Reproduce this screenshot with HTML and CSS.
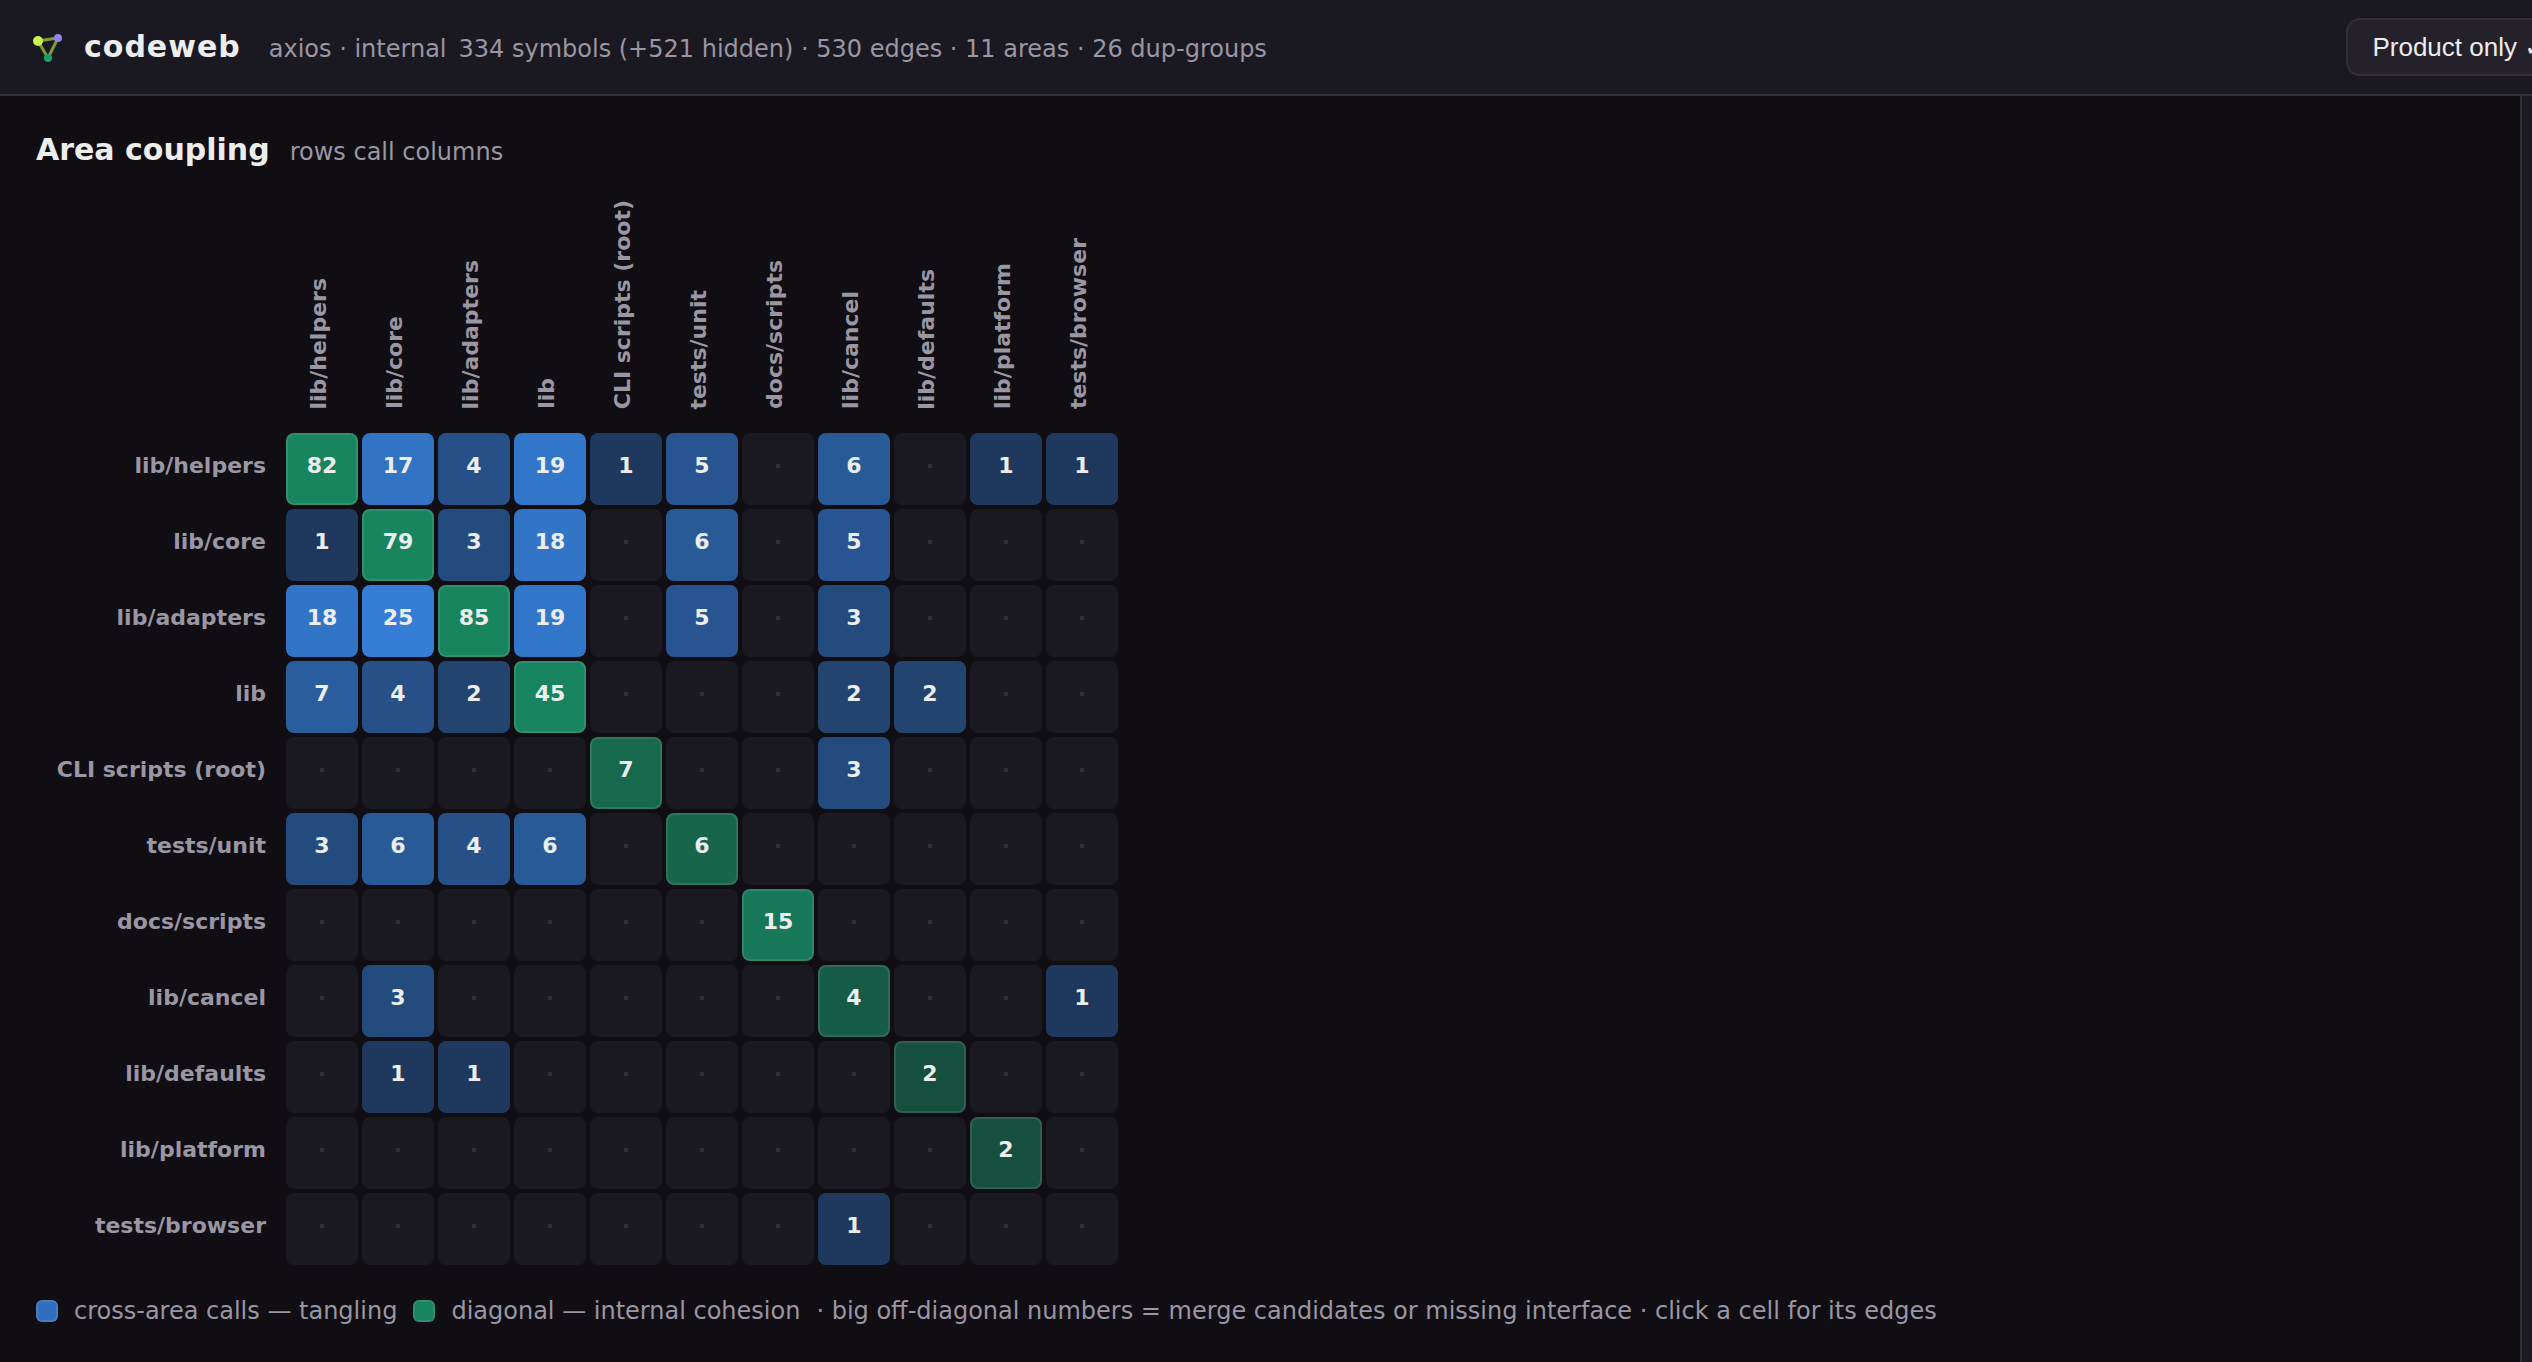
FILE: index.html
```html
<!DOCTYPE html>
<html lang="en">
<head>
    <meta charset="UTF-8">
    <meta name="viewport" content="width=device-width, initial-scale=1.0">
    <title>codeweb</title>
    <link rel="stylesheet" href="styles.css">
</head>
<body>
    <header class="topbar">
        <svg class="logo" viewBox="0 0 36 36" aria-hidden="true">
            <path d="M8 12 L28 9 L18 29 Z" fill="none" stroke="#7f9a37" stroke-width="3"/>
            <circle cx="8" cy="12" r="5" fill="#c8f54a"/>
            <circle cx="28" cy="9" r="4" fill="#9085e9"/>
            <circle cx="18" cy="29" r="4" fill="#199e70"/>
        </svg>
        <div class="heading">
            <span class="brand">codeweb</span>
            <span class="meta"><span>axios · internal</span><span>334 symbols (+521 hidden) · 530 edges · 11 areas · 26 dup-groups</span></span>
        </div>
        <button type="button" class="filter">Product only ✓</button>
    </header>

    <div class="layout">
        <main class="matrix-view">
            <div class="title-row">
                <h1>Area coupling</h1>
                <span class="hint">rows call columns</span>
            </div>

            <table class="matrix">
                <thead><tr id="matrix-head"><td></td></tr></thead>
                <tbody id="matrix-body"></tbody>
            </table>

            <div class="legend">
                <span class="key"><i class="swatch cross"></i>cross-area calls — tangling</span>
                <span class="key"><i class="swatch diagonal"></i>diagonal — internal cohesion</span>
                <span>· big off-diagonal numbers = merge candidates or missing interface · click a cell for its edges</span>
            </div>
        </main>
        <aside class="side-panel"></aside>
    </div>
    <script src="matrix.js"></script>
</body>
</html>
```
FILE: styles.css
```css
* {
    box-sizing: border-box;
}

body {
    margin: 0;
    height: 100vh;
    display: flex;
    flex-direction: column;
    overflow: hidden;
    background: #100d13;
    color: #ededed;
    font-family: "DejaVu Sans", sans-serif;
    font-size: 24px;
}

/* Top bar */
.topbar {
    display: flex;
    align-items: center;
    padding: 18px 0 18px 30px;
    background: #1a1921;
    border-bottom: 2px solid #322f39;
    white-space: nowrap;
    overflow: hidden;
}

.logo {
    width: 36px;
    height: 36px;
    flex: none;
    margin-right: 18px;
}

.heading {
    display: flex;
    align-items: baseline;
    gap: 28px;
    padding-bottom: 2px;
}

.brand {
    font-size: 30px;
    font-weight: bold;
    letter-spacing: 1px;
}

.meta {
    display: flex;
    gap: 12px;
    color: #9a96a3;
}

.filter {
    flex: none;
    margin-left: auto;
    margin-right: -40px;
    padding: 12px 24px;
    border: 2px solid #322f39;
    border-radius: 14px;
    background: #24212a;
    color: #ededed;
    font-family: "Liberation Sans", "DejaVu Sans", sans-serif;
    font-size: 26px;
    line-height: 30px;
}

/* Main area and the panel on the right */
.layout {
    flex: 1;
    display: flex;
    min-height: 0;
}

.matrix-view {
    flex: 1;
    padding: 34px 36px;
}

.side-panel {
    width: 12px;
    background: #1a1921;
    border-left: 2px solid #322f39;
}

.title-row {
    display: flex;
    align-items: baseline;
    gap: 20px;
    line-height: 40px;
}

h1 {
    margin: 0;
    font-size: 30px;
}

.hint,
.legend {
    color: #9a96a3;
}

/* Coupling matrix */
.matrix {
    margin-left: -4px;
    border-spacing: 4px;
    font-size: 22px;
    font-weight: bold;
}

.matrix td,
.matrix th {
    padding: 0;
}

.matrix thead th {
    vertical-align: bottom;
    color: #9a96a3;
}

.col-label {
    display: block;
    width: 72px;
    padding: 20px 20px 24px 0;
    line-height: 26px;
    writing-mode: vertical-rl;
    transform: rotate(180deg);
    text-align: left;
    white-space: nowrap;
}

.matrix tbody th {
    min-width: 246px;
    padding: 0 16px 8px 0;
    color: #9a96a3;
    text-align: right;
}

.cell {
    display: block;
    width: 72px;
    height: 72px;
    padding: 0 0 8px;
    border: 2px solid transparent;
    border-radius: 8px;
    background: #1a1921 border-box;
    color: #ededed;
    font: inherit;
}

.cell.empty {
    color: #322f39;
}

.cell.inner {
    border-color: rgba(255, 255, 255, 0.1);
}

/* Legend */
.legend {
    display: flex;
    align-items: center;
    gap: 16px;
    margin-top: 24px;
    line-height: 36px;
    white-space: nowrap;
}

.key {
    display: flex;
    align-items: center;
    gap: 16px;
}

.swatch {
    width: 22px;
    height: 22px;
    border: 2px solid rgba(255, 255, 255, 0.1);
    border-radius: 6px;
}

.swatch.cross {
    background: #316fbc border-box;
}

.swatch.diagonal {
    background: #18845f border-box;
}
```
FILE: matrix.js
```js
const areas = ['lib/helpers', 'lib/core', 'lib/adapters', 'lib', 'CLI scripts (root)', 'tests/unit',
    'docs/scripts', 'lib/cancel', 'lib/defaults', 'lib/platform', 'tests/browser'];

const calls = [
    [82, 17, 4, 19, 1, 5, 0, 6, 0, 1, 1],
    [1, 79, 3, 18, 0, 6, 0, 5, 0, 0, 0],
    [18, 25, 85, 19, 0, 5, 0, 3, 0, 0, 0],
    [7, 4, 2, 45, 0, 0, 0, 2, 2, 0, 0],
    [0, 0, 0, 0, 7, 0, 0, 3, 0, 0, 0],
    [3, 6, 4, 6, 0, 6, 0, 0, 0, 0, 0],
    [0, 0, 0, 0, 0, 0, 15, 0, 0, 0, 0],
    [0, 3, 0, 0, 0, 0, 0, 4, 0, 0, 1],
    [0, 1, 1, 0, 0, 0, 0, 0, 2, 0, 0],
    [0, 0, 0, 0, 0, 0, 0, 0, 0, 2, 0],
    [0, 0, 0, 0, 0, 0, 0, 1, 0, 0, 0]
];

const crossColors = {
    1: '#1f395e', 2: '#22446f', 3: '#244b7e', 4: '#275088', 5: '#285492', 6: '#295a98',
    7: '#2a5d9e', 17: '#3273c3', 18: '#3275c7', 19: '#3276ca', 25: '#357dd7'
};
const innerColors = {
    2: '#164f3d', 4: '#165b45', 6: '#17654b', 7: '#17694e', 15: '#18785a',
    45: '#18835f', 79: '#18855f', 82: '#18855f', 85: '#18855f'
};

const head = document.getElementById('matrix-head');
const body = document.getElementById('matrix-body');

areas.forEach(function(area, row) {
    const th = document.createElement('th');
    th.scope = 'col';
    th.innerHTML = '<span class="col-label">' + area + '</span>';
    head.appendChild(th);

    const tr = document.createElement('tr');
    tr.innerHTML = '<th scope="row">' + area + '</th>';
    calls[row].forEach(function(count, col) {
        const td = document.createElement('td');
        const cell = document.createElement('button');
        cell.type = 'button';
        cell.className = 'cell';
        cell.textContent = count || '·';
        if (!count) {
            cell.classList.add('empty');
        } else if (row === col) {
            cell.classList.add('inner');
            cell.style.backgroundColor = innerColors[count];
        } else {
            cell.style.backgroundColor = crossColors[count];
        }
        td.appendChild(cell);
        tr.appendChild(td);
    });
    body.appendChild(tr);
});
```
